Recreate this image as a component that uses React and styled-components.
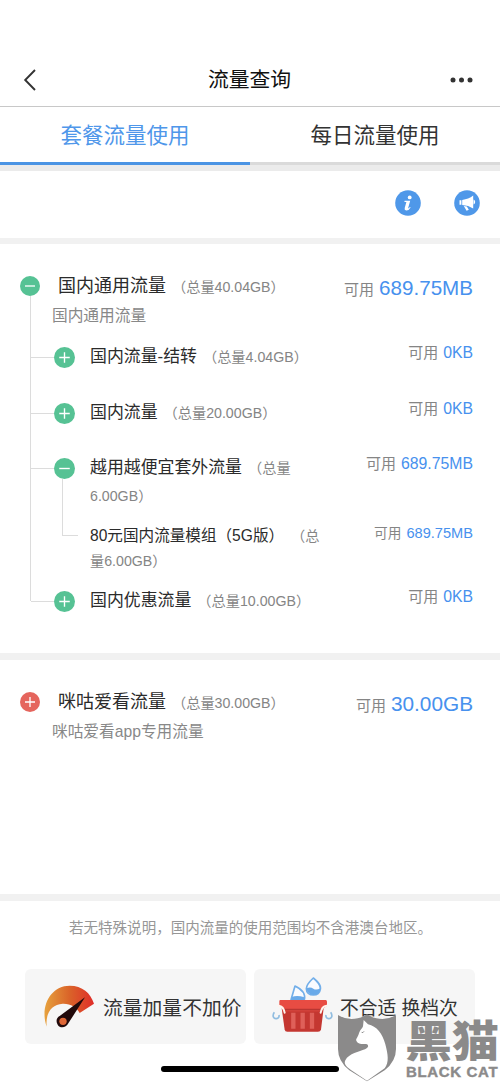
import React from 'react';
import styled, { createGlobalStyle } from 'styled-components';

const GlobalStyle = createGlobalStyle`
  * { box-sizing: border-box; }
  body {
    margin: 0;
    background: #fff;
    font-family: "Liberation Sans", "Noto Sans CJK SC", sans-serif;
    color: #2e2e2e;
  }
`;

const Screen = styled.div`
  position: relative;
  width: 500px;
  height: 1082px;
  overflow: hidden;
  display: flex;
  flex-direction: column;
  background: #fff;
`;

const NavBar = styled.header`
  height: 107px;
  padding: 54px 27px 0 23px;
  border-bottom: 1px solid #c8c8c8;
  display: grid;
  grid-template-columns: 60px 1fr 60px;
  align-items: center;
  flex: none;
`;

const NavTitle = styled.h1`
  margin: 0;
  padding-left: 3px;
  font-size: 20.8px;
  line-height: 30px;
  font-weight: 400;
  color: #111;
  text-align: center;
`;

const MoreIcon = styled.svg`
  justify-self: end;
`;

const Tabs = styled.nav`
  display: flex;
  height: 58px;
  flex: none;
`;

const Tab = styled.div`
  flex: 1;
  text-align: center;
  font-size: 21.5px;
  line-height: 54px;
  padding-top: 2px;
  height: 58px;
  color: ${(p) => (p.$active ? '#4f97ea' : '#333')};
  border-bottom: 3px solid ${(p) => (p.$active ? '#4b94e4' : '#dadada')};
`;

const Band = styled.div`
  height: ${(p) => p.$h || 7}px;
  flex: none;
  background: ${(p) => p.$tone || '#f1f1f1'};
`;

const Tools = styled.div`
  height: 67px;
  flex: none;
  display: flex;
  justify-content: flex-end;
  align-items: center;
  gap: 33px;
  padding: 0 20px 3px 0;
`;

const Group = styled.section`
  display: flex;
  flex: none;
  height: ${(p) => p.$h}px;
`;

const GroupRail = styled.div`
  width: 20px;
  margin-left: 20px;
  padding-top: 32px;
  display: flex;
  flex-direction: column;
  align-items: center;
`;

const Badge = styled.svg`
  display: block;
  flex: none;
  width: ${(p) => p.$size}px;
  height: ${(p) => p.$size}px;
`;

const Trunk = styled.div`
  width: 1px;
  flex: 1;
  margin-bottom: 52px;
  background: #dcdcdc;
`;

const GroupBody = styled.div`
  flex: 1;
  margin-left: 12px;
  padding-top: 30px;
`;

const Head = styled.div`
  display: flex;
  justify-content: space-between;
  height: 24px;
  padding: 0 27px 0 6px;
`;

const Name = styled.div`
  font-size: ${(p) => p.$size}px;
  line-height: ${(p) => p.$line}px;
  color: #2b2b2b;
`;

const Total = styled.span`
  margin-left: ${(p) => p.$gap || 6}px;
  font-size: 14.2px;
  color: #858585;
`;

const Desc = styled.div`
  height: 31px;
  padding-top: 6px;
  font-size: 15.7px;
  line-height: 24px;
  color: #888;
`;

const Value = styled.div`
  display: flex;
  align-items: baseline;
  gap: 5px;
  white-space: nowrap;
  font-size: ${(p) => p.$label || 15}px;
  line-height: 24px;
  margin-top: ${(p) => p.$top || 0}px;
  color: #858585;
`;

const Amount = styled.span`
  font-size: ${(p) => p.$size}px;
  color: #4791ee;
`;

const Children = styled.div`
  margin-left: -21px;
`;

const ChildRow = styled.div`
  display: flex;
  min-height: ${(p) => p.$h}px;
`;

const Branch = styled.div`
  width: 23px;
  height: 1px;
  margin-top: 28px;
  background: #dcdcdc;
`;

const ChildRail = styled.div`
  width: 20px;
  padding-top: 18px;
`;

const Elbow = styled.div`
  width: 16px;
  height: 57px;
  margin-left: 8px;
  border-left: 1px solid #dcdcdc;
  border-bottom: 1px solid #dcdcdc;
`;

const ChildBody = styled.div`
  flex: 1;
  margin-left: 16px;
  padding: 14px 27px 0 0;
`;

const ChildHead = styled.div`
  display: flex;
  justify-content: space-between;
  align-items: flex-start;
  margin-top: ${(p) => p.$top || 0}px;
`;

const NameColumn = styled.div`
  width: 235px;
  flex: none;
`;

const Footer = styled.footer`
  flex: 1;
  display: flex;
  flex-direction: column;
  align-items: center;
`;

const Note = styled.p`
  margin: 15px 0 0 1px;
  font-size: 14.52px;
  line-height: 24px;
  color: #969696;
  white-space: nowrap;
`;

const Actions = styled.div`
  display: flex;
  gap: 8px;
  margin-top: 29px;
`;

const Action = styled.button`
  width: 221px;
  height: 75px;
  border: 0;
  border-radius: 6px;
  background: #f6f6f6;
  padding: 0 0 0 ${(p) => p.$pad}px;
  display: flex;
  align-items: center;
  gap: ${(p) => p.$gap}px;
  font-family: inherit;
  font-size: ${(p) => p.$size}px;
  color: #333;
  white-space: nowrap;
`;

const BasketDrawing = styled.svg`
  margin-bottom: 3px;
`;

const HomeBar = styled.div`
  width: 178px;
  height: 6px;
  margin-top: 22px;
  border-radius: 3px;
  background: #000;
`;

const Watermark = styled.div`
  position: absolute;
  left: 337px;
  top: 1014px;
  width: 163px;
  height: 68px;
  color: #8b8a8a;
`;

const Shield = styled.svg`
  position: absolute;
  left: 0;
  top: 0;
`;

const BrandName = styled.div`
  position: absolute;
  left: 68px;
  top: 1px;
  font-family: "Noto Sans CJK SC", sans-serif;
  font-weight: 900;
  font-size: 47px;
  line-height: 47px;
  white-space: nowrap;
  transform: scaleY(0.91);
`;

const BrandLatin = styled.div`
  position: absolute;
  left: 69px;
  top: 50px;
  font-weight: 700;
  font-size: 15px;
  line-height: 16px;
  letter-spacing: 0.65px;
  white-space: nowrap;
  -webkit-text-stroke: 0.4px currentColor;
`;

function Toggle({ open, color = '#56c294', size = 20 }) {
  return (
    <Badge viewBox="0 0 20 20" $size={size}>
      <circle cx="10" cy="10" r="10" fill={color} />
      <path d={open ? 'M5 10H15' : 'M5 10H15M10 5V15'} stroke="#fff" strokeWidth="1.3" fill="none" />
    </Badge>
  );
}

function Available({ amount, size, label, top }) {
  return (
    <Value $label={label} $top={top}>
      <span>可用</span>
      <Amount $size={size}>{amount}</Amount>
    </Value>
  );
}

function Child({ name, total, amount, open, height, line = 27, children }) {
  return (
    <ChildRow $h={height}>
      <Branch />
      <ChildRail>
        <Toggle open={open} size={21} />
        {children && <Elbow />}
      </ChildRail>
      <ChildBody>
        <ChildHead>
          <NameColumn>
            <Name $size={16.9} $line={line}>{name}<Total>（总量{total}）</Total></Name>
          </NameColumn>
          <Available amount={amount} size={15.8} top={-2} />
        </ChildHead>
        {children}
      </ChildBody>
    </ChildRow>
  );
}

function InfoIcon() {
  return (
    <svg width="26" height="26" viewBox="0 0 26 26">
      <circle cx="13" cy="13" r="12.8" fill="#4f98e9" />
      <circle cx="14.7" cy="7.4" r="1.9" fill="#fff" />
      <path d="M9.6 10.8H15.2L13 18.4Q13.9 18.2 15 16.9L15.6 17.4Q13.7 20.7 11.2 20.6Q9.1 20.3 9.7 18L11.4 11.9H9.4Z" fill="#fff" />
    </svg>
  );
}

function HornIcon() {
  return (
    <svg width="26" height="26" viewBox="0 0 26 26">
      <circle cx="13" cy="13" r="12.8" fill="#4f98e9" />
      <path d="M5.5 10.2H7.4V14.8H5.5ZM8.2 9.9Q14.5 9.3 19.2 5.6V18.6Q14.5 15.4 8.2 15ZM19.6 9.6Q21.2 10.4 21.2 12Q21.2 13.8 19.6 14.4Z" fill="#fff" />
      <path d="M9.8 16L12.8 16.4L14.8 19.8L12.6 20.8Z" fill="#fff" />
    </svg>
  );
}

function GaugeIcon() {
  return (
    <svg width="52" height="43" viewBox="0 0 156 129">
      <defs>
        <linearGradient id="gauge" x1="0" x2="1" y1="0" y2="0">
          <stop offset="0" stopColor="#e6a13d" />
          <stop offset="0.5" stopColor="#da6429" />
          <stop offset="1" stopColor="#df2d29" />
        </linearGradient>
      </defs>
      <path d="M11 125C-10 65 22 2 80 2C118 2 143 24 153 56L110 84C101 66 82 55 59 56C27 58 7 82 11 125Z" fill="url(#gauge)" />
      <path d="M126 37L76 115C69 129 51 131 44 119C37 107 42 97 50 93Z" fill="#220a0b" />
      <circle cx="60" cy="109" r="11" fill="#df6736" />
    </svg>
  );
}

function BasketIcon() {
  return (
    <BasketDrawing width="61" height="56" viewBox="0 0 183 168">
      <g fill="none" stroke="#91bde0" strokeWidth="5">
        <path d="M7 106C-1 118 6 126 13 125C20 124 22 119 21 114" />
        <path d="M176 106C184 118 177 126 170 125C163 124 161 119 162 114" />
      </g>
      <g fill="#f9fbff" stroke="#73afe9" strokeWidth="5" strokeLinejoin="round">
        <path d="M124 3C142 18 147 26 145 37C143 49 134 54 124 54C112 54 103 47 103 35C103 25 112 14 124 3Z" />
        <path d="M69 27L57 68H97C101 52 92 38 69 27Z" />
      </g>
      <path d="M104 34Q115 29 124 35T145 34C145 48 136 54 124 54C113 54 104 46 104 34Z" fill="#69aae9" />
      <path d="M59 60Q75 53 97 61V70H58Z" fill="#69aae9" />
      <path d="M29 94H155L147 158Q145 164 138 164H46Q39 164 38 158Z" fill="#c43731" />
      <path d="M25 69H161Q165 69 165 74V87L154 94Q149 97 153 103H31Q35 94 29 90L22 86V73Q22 69 25 69Z" fill="#e84c43" />
      <path d="M33 98H151" stroke="#b83632" strokeWidth="5" />
      <path d="M20 86Q35 88 38 107M164 86Q149 88 146 107" fill="none" stroke="#fff3ed" strokeWidth="6" strokeLinecap="round" />
      <path d="M64 107V155M92 107V155M120 107V155" stroke="#df6059" strokeWidth="13" />
    </BasketDrawing>
  );
}

export default function App() {
  return (
    <Screen>
      <GlobalStyle />
      <NavBar>
        <svg width="14" height="22" viewBox="0 0 14 22">
          <path d="M12 1L2.2 11L12 21" fill="none" stroke="#333" strokeWidth="1.9" />
        </svg>
        <NavTitle>流量查询</NavTitle>
        <MoreIcon width="23" height="6" viewBox="0 0 23 6" fill="#333">
          <circle cx="3" cy="3" r="2.5" />
          <circle cx="11.5" cy="3" r="2.5" />
          <circle cx="20" cy="3" r="2.5" />
        </MoreIcon>
      </NavBar>
      <Tabs>
        <Tab $active>套餐流量使用</Tab>
        <Tab>每日流量使用</Tab>
      </Tabs>
      <Band $h={6} $tone="#ebebeb" />
      <Tools>
        <InfoIcon />
        <HornIcon />
      </Tools>
      <Band $h={6} />

      <Group $h={409}>
        <GroupRail>
          <Toggle open />
          <Trunk />
        </GroupRail>
        <GroupBody>
          <Head>
            <Name $size={18} $line={24}>国内通用流量<Total>（总量40.04GB）</Total></Name>
            <Available amount="689.75MB" size={20.6} top={2} />
          </Head>
          <Desc>国内通用流量</Desc>
          <Children>
            <Child name="国内流量-结转" total="4.04GB" amount="0KB" height={56} />
            <Child name="国内流量" total="20.00GB" amount="0KB" height={55} />
            <Child name="越用越便宜套外流量" total="6.00GB" amount="689.75MB" height={133} open>
              <ChildHead $top={14}>
                <NameColumn>
                  <Name $size={15.6} $line={24.5}>80元国内流量模组（5G版）<Total $gap={14}>（总量6.00GB）</Total></Name>
                </NameColumn>
                <Available amount="689.75MB" size={14.6} label={13.7} top={-3} />
              </ChildHead>
            </Child>
            <Child name="国内优惠流量" total="10.00GB" amount="0KB" height={56} />
          </Children>
        </GroupBody>
      </Group>
      <Band />

      <Group $h={234}>
        <GroupRail>
          <Toggle color="#e5655d" />
        </GroupRail>
        <GroupBody>
          <Head>
            <Name $size={18} $line={24}>咪咕爱看流量<Total>（总量30.00GB）</Total></Name>
            <Available amount="30.00GB" size={20.8} top={2} />
          </Head>
          <Desc>咪咕爱看app专用流量</Desc>
        </GroupBody>
      </Group>
      <Band />

      <Footer>
        <Note>若无特殊说明，国内流量的使用范围均不含港澳台地区。</Note>
        <Actions>
          <Action $pad={18} $gap={8} $size={19.8}>
            <GaugeIcon />
            流量加量不加价
          </Action>
          <Action $pad={18} $gap={7} $size={18.8}>
            <BasketIcon />
            不合适 换档次
          </Action>
        </Actions>
        <HomeBar />
      </Footer>

      <Watermark>
        <Shield width="60" height="68" viewBox="0 0 180 204">
          <path d="M3 3Q30 20 62 13Q76 10 90 1Q104 10 118 13Q150 20 177 3V105Q177 142 143 169L90 202L37 169Q3 142 3 105Z" fill="#8b8a8a" />
          <path d="M80 18L93 31C119 36 137 60 145 91C153 122 157 145 143 163L90 200L43 169C26 157 20 149 25 139C36 118 67 113 84 106C96 100 96 92 87 90C74 90 62 90 58 80C56 75 62 70 65 61C69 47 75 45 78 37Z" fill="#fff" />
          <path d="M74 55Q78 58 81 52" stroke="#8b8a8a" strokeWidth="3" fill="none" />
        </Shield>
        <BrandName>黑猫</BrandName>
        <BrandLatin>BLACK CAT</BrandLatin>
      </Watermark>
    </Screen>
  );
}
